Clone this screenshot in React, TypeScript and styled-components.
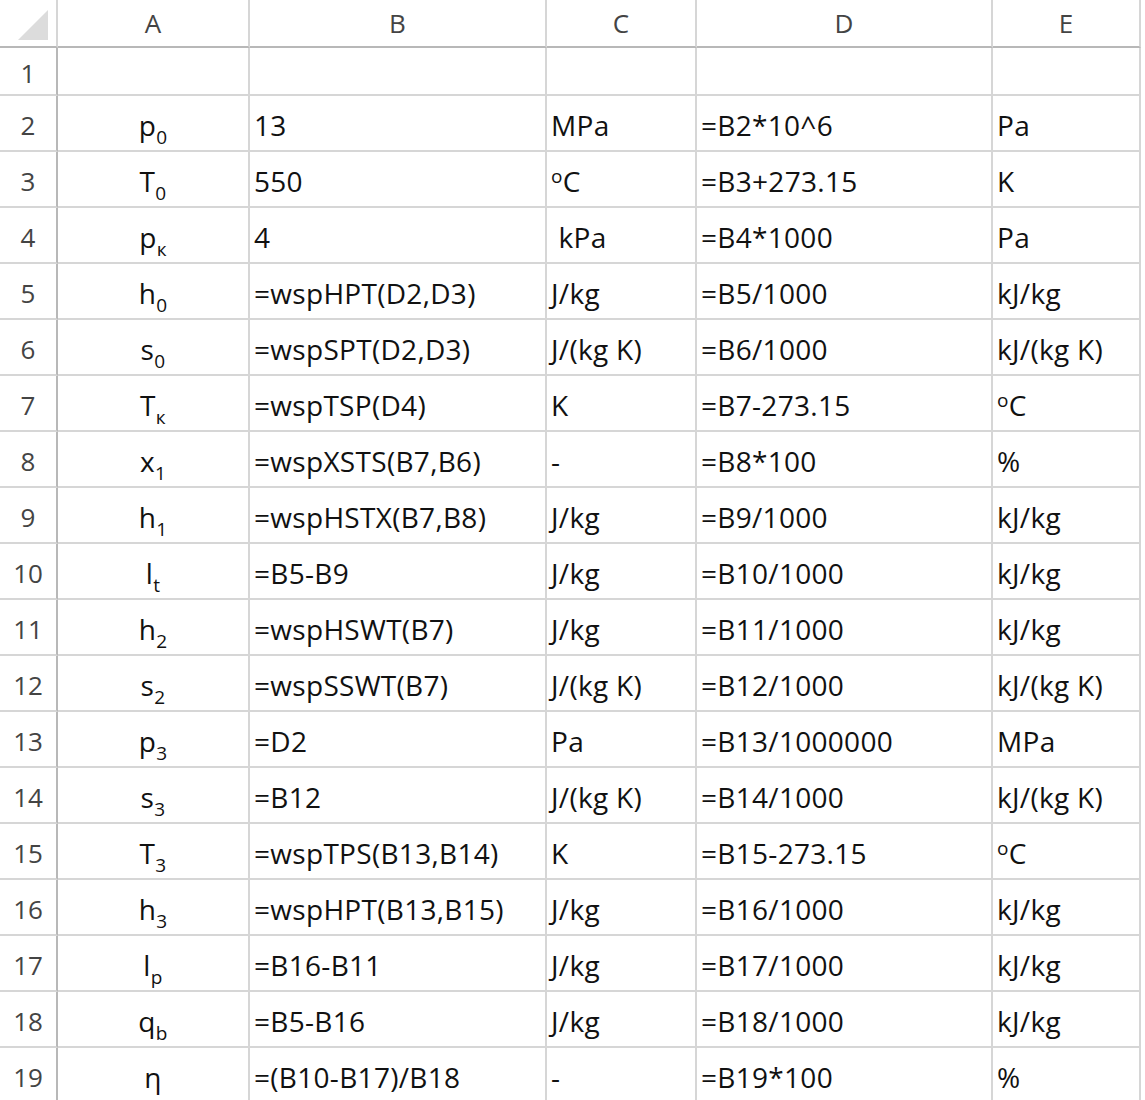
import styled, { createGlobalStyle } from "styled-components";

const Global = createGlobalStyle`
  body { margin: 0; background: #fff; font-family: "Open Sans", "Liberation Sans", sans-serif; }
`;

const cols = [58, 192, 297, 150, 296, 148];

const Grid = styled.div`
  display: grid;
  grid-template-columns: ${cols.map((c) => c + "px").join(" ")};
  grid-template-rows: 48px 48px repeat(18, 56px);
  width: 1145px;
  height: 1100px;
  overflow: hidden;
`;

const Corner = styled.div`
  position: relative;
  border-right: 2px solid #d6d6d6;
  border-bottom: 2px solid #b8b8b8;
  &::after {
    content: "";
    position: absolute;
    right: 8px;
    bottom: 6px;
    border-left: 30px solid transparent;
    border-bottom: 30px solid #dcdcdc;
  }
`;

const ColHead = styled.div`
  display: flex;
  align-items: center;
  justify-content: center;
  font-size: 26px;
  color: #444;
  border-right: 2px solid #d6d6d6;
  border-bottom: 2px solid #b8b8b8;
`;

const RowHead = styled.div`
  display: flex;
  align-items: center;
  justify-content: center;
  font-size: 26px;
  color: #444;
  padding-top: 4px;
  border-right: 2px solid #b8b8b8;
  border-bottom: 2px solid #d6d6d6;
`;

const Cell = styled.div<{ $center?: boolean }>`
  display: flex;
  align-items: center;
  justify-content: ${(p) => (p.$center ? "center" : "flex-start")};
  padding-left: ${(p) => (p.$center ? "0" : "4px")};
  padding-top: 4px;
  font-size: 28px;
  letter-spacing: 0.3px;
  color: #111;
  white-space: nowrap;
  overflow: hidden;
  border-right: 2px solid #d6d6d6;
  border-bottom: 2px solid #d6d6d6;
`;

const Sub = styled.sub`
  font-size: 19px;
  vertical-align: -8px;
  line-height: 0;
`;

const Sup = styled.sup`
  font-size: 19px;
  vertical-align: 9px;
  line-height: 0;
`;

type Row = [string, string, string, string, string, string];

const rows: Row[] = [
  ["", "", "", "", "", ""],
  ["p", "0", "13", "MPa", "=B2*10^6", "Pa"],
  ["T", "0", "550", "°C", "=B3+273.15", "K"],
  ["p", "к", "4", " kPa", "=B4*1000", "Pa"],
  ["h", "0", "=wspHPT(D2,D3)", "J/kg", "=B5/1000", "kJ/kg"],
  ["s", "0", "=wspSPT(D2,D3)", "J/(kg K)", "=B6/1000", "kJ/(kg K)"],
  ["T", "к", "=wspTSP(D4)", "K", "=B7-273.15", "°C"],
  ["x", "1", "=wspXSTS(B7,B6)", "-", "=B8*100", "%"],
  ["h", "1", "=wspHSTX(B7,B8)", "J/kg", "=B9/1000", "kJ/kg"],
  ["l", "t", "=B5-B9", "J/kg", "=B10/1000", "kJ/kg"],
  ["h", "2", "=wspHSWT(B7)", "J/kg", "=B11/1000", "kJ/kg"],
  ["s", "2", "=wspSSWT(B7)", "J/(kg K)", "=B12/1000", "kJ/(kg K)"],
  ["p", "3", "=D2", "Pa", "=B13/1000000", "MPa"],
  ["s", "3", "=B12", "J/(kg K)", "=B14/1000", "kJ/(kg K)"],
  ["T", "3", "=wspTPS(B13,B14)", "K", "=B15-273.15", "°C"],
  ["h", "3", "=wspHPT(B13,B15)", "J/kg", "=B16/1000", "kJ/kg"],
  ["l", "p", "=B16-B11", "J/kg", "=B17/1000", "kJ/kg"],
  ["q", "b", "=B5-B16", "J/kg", "=B18/1000", "kJ/kg"],
  ["η", "", "=(B10-B17)/B18", "-", "=B19*100", "%"],
];

function Unit({ text }: { text: string }) {
  if (text === "°C") return <span><Sup>o</Sup>C</span>;
  return <span style={{ whiteSpace: "pre" }}>{text}</span>;
}

export default function App() {
  return (
    <>
      <Global />
      <Grid>
        <Corner />
        {["A", "B", "C", "D", "E"].map((c) => (
          <ColHead key={c}>{c}</ColHead>
        ))}
        {rows.map((r, i) => (
          <>
            <RowHead key={"h" + i}>{i + 1}</RowHead>
            <Cell $center>
              <span>
                {r[0]}
                {r[1] && <Sub>{r[1]}</Sub>}
              </span>
            </Cell>
            <Cell>{r[2]}</Cell>
            <Cell><Unit text={r[3]} /></Cell>
            <Cell>{r[4]}</Cell>
            <Cell><Unit text={r[5]} /></Cell>
          </>
        ))}
      </Grid>
    </>
  );
}
